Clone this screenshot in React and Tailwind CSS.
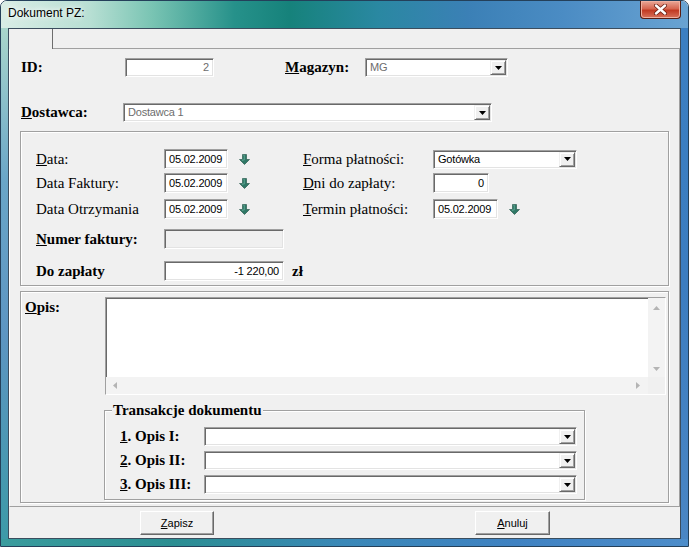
const serif = "font-['Liberation_Serif',serif]";
const sans = "font-['Liberation_Sans',Arial,sans-serif]";
const sunken =
  "border border-t-[#a0a0a0] border-l-[#a0a0a0] border-r-white border-b-white shadow-[inset_1px_1px_0_#696969,inset_-1px_-1px_0_#e3e3e3]";
const etched = "border border-[#a0a0a0] shadow-[inset_1px_1px_0_#fff,1px_1px_0_#fff]";

function Field({ className = "", value = "", right = false, muted = false, disabled = false }) {
  return (
    <div
      className={`${sunken} ${className} flex items-center px-[4px] ${disabled ? "bg-[#f0f0f0]" : "bg-white"} ${right ? "justify-end" : ""} ${sans} text-[11px] tracking-[-0.2px] ${muted ? "text-[#6d6d6d]" : "text-black"}`}
    >
      {value}
    </div>
  );
}

function DropBtn() {
  return (
    <div className="w-[16px] bg-[#f0f0f0] border border-t-[#f0f0f0] border-l-[#f0f0f0] border-r-[#696969] border-b-[#696969] shadow-[inset_1px_1px_0_#fff,inset_-1px_-1px_0_#a0a0a0] flex items-center justify-center">
      <svg width="7" height="4" viewBox="0 0 7 4">
        <path d="M0 0h7L3.5 4z" fill="#000" />
      </svg>
    </div>
  );
}

function Combo({ className = "", value = "", muted = false }) {
  return (
    <div className={`${sunken} ${className} h-[19px] bg-white flex items-stretch p-[1px]`}>
      <div
        className={`flex-1 flex items-center pl-[3px] ${sans} text-[11px] tracking-[-0.2px] ${muted ? "text-[#6d6d6d]" : "text-black"}`}
      >
        {value}
      </div>
      <DropBtn />
    </div>
  );
}

function GreenArrow({ className = "" }) {
  return (
    <svg className={className} width="11" height="11" viewBox="0 0 11 11">
      <path d="M3.5 0.5h4v5h3l-5 5-5-5h3z" fill="#2f7866" stroke="#1d4d42" strokeWidth="0.6" />
      <path d="M4.3 1.2h1v4.8h-2.3l0.6 0.6" fill="none" stroke="#6fb3a0" strokeWidth="0.7" />
    </svg>
  );
}

function Label({ className = "", bold = false, children }) {
  return (
    <div className={`${className} ${serif} text-[15px] leading-[17px] text-black ${bold ? "font-bold" : ""}`}>
      {children}
    </div>
  );
}

function Btn({ className = "", children }) {
  return (
    <div
      className={`${className} h-[24px] bg-[#f0f0f0] border border-t-white border-l-white border-r-[#696969] border-b-[#696969] shadow-[inset_-1px_-1px_0_#a0a0a0] flex items-center justify-center ${sans} text-[11px] text-black`}
    >
      {children}
    </div>
  );
}

function ScrollTri({ dir }) {
  const d = {
    up: "M0 4L3.5 0 7 4z",
    down: "M0 0h7L3.5 4z",
    left: "M4 0v7L0 3.5z",
    right: "M0 0v7L4 3.5z",
  }[dir];
  const vert = dir === "up" || dir === "down";
  return (
    <svg width={vert ? 7 : 4} height={vert ? 4 : 7} viewBox={vert ? "0 0 7 4" : "0 0 4 7"}>
      <path d={d} fill="#b4b4b4" />
    </svg>
  );
}

function DateRow({ label, value, right }) {
  return (
    <div className="flex items-center h-[20px]">
      <div className="w-[267px] flex items-center">
        <Label className="w-[128px]">{label}</Label>
        <Field className="w-[64px] h-[20px]" value={value} />
        <GreenArrow className="ml-[11px]" />
      </div>
      {right}
    </div>
  );
}

export default function App() {
  return (
    <div className="w-[689px] h-[547px] bg-white">
      <div className="w-[689px] h-[547px] flex flex-col border border-[#24405a] rounded-t-[7px] overflow-hidden">
        {/* title bar */}
        <div className="h-[27px] shrink-0 flex items-start justify-between bg-[linear-gradient(90deg,#d9ede6_0%,#b7dfd3_13%,#79c4b3_22%,#26918a_34%,#16827b_42%,#2a88a2_55%,#3b80b6_68%,#4b8cc4_82%,#69a3d2_100%)]">
          <div className={`pl-[7px] pt-[5px] text-[12px] leading-[14px] text-black ${sans} [text-shadow:0_0_5px_#fff,0_0_8px_#fff]`}>
            Dokument PZ:
          </div>
          <div className="mr-[7px] w-[41px] h-[18px] border border-t-0 border-[#5a1d12] rounded-b-[4px] bg-[linear-gradient(180deg,#e9a898_0%,#d66650_45%,#c23a22_55%,#d8735c_100%)] shadow-[inset_0_0_0_1px_#f0b0a0] flex items-center justify-center">
            <svg width="13" height="11" viewBox="0 0 13 11">
              <path d="M2 1.5l9 8M11 1.5l-9 8" stroke="#6b1e12" strokeWidth="4" strokeLinecap="round" />
              <path d="M2 1.5l9 8M11 1.5l-9 8" stroke="#fff" strokeWidth="2.4" strokeLinecap="round" />
            </svg>
          </div>
        </div>

        <div className="flex flex-1">
          <div className="w-[7px] bg-[linear-gradient(180deg,#a9d6cc_0%,#6aa6c8_30%,#5d95c2_60%,#3d9aa8_100%)]" />

          {/* client area */}
          <div className="w-[673px] border border-[#3b4d5e] bg-[#f0f0f0] flex flex-col">
            {/* tab header */}
            <div className="h-[20px] shrink-0 flex">
              <div className="w-[44px] border-r border-r-[#6d6d6d]" />
              <div className="flex-1 border-b border-b-[#a0a0a0]" />
            </div>

            {/* tab page */}
            <div className="h-[458px] shrink-0 flex flex-col border-l border-l-white border-r border-r-[#a0a0a0] border-b border-b-[#a0a0a0]">
              <div className="mt-[9px] pl-[11px] h-[19px] flex items-center">
                <Label bold className="w-[104px]">ID:</Label>
                <Field className="w-[89px] h-[19px]" value="2" right muted />
                <Label bold className="ml-[71px] w-[80px]">
                  <u>M</u>agazyn:
                </Label>
                <Combo className="w-[143px]" value="MG" muted />
              </div>

              <div className="mt-[26px] pl-[11px] h-[19px] flex items-center">
                <Label bold className="w-[102px]">
                  <u>D</u>ostawca:
                </Label>
                <Combo className="w-[369px]" value="Dostawca 1" muted />
              </div>

              {/* group 1 */}
              <div className={`mt-[9px] ml-[10px] w-[649px] h-[155px] shrink-0 ${etched} flex flex-col pl-[15px]`}>
                <div className="mt-[17px]">
                  <DateRow
                    label={<><u>D</u>ata:</>}
                    value="05.02.2009"
                    right={
                      <div className="flex items-center">
                        <Label className="w-[130px]">
                          <u>F</u>orma płatności:
                        </Label>
                        <Combo className="w-[144px]" value="Gotówka" />
                      </div>
                    }
                  />
                </div>
                <div className="mt-[4px]">
                  <DateRow
                    label="Data Faktury:"
                    value="05.02.2009"
                    right={
                      <div className="flex items-center">
                        <Label className="w-[130px]">
                          <u>D</u>ni do zapłaty:
                        </Label>
                        <Field className="w-[56px] h-[20px]" value="0" right />
                      </div>
                    }
                  />
                </div>
                <div className="mt-[6px]">
                  <DateRow
                    label="Data Otrzymania"
                    value="05.02.2009"
                    right={
                      <div className="flex items-center">
                        <Label className="w-[130px]">
                          <u>T</u>ermin płatności:
                        </Label>
                        <Field className="w-[65px] h-[20px]" value="05.02.2009" />
                        <GreenArrow className="ml-[11px]" />
                      </div>
                    }
                  />
                </div>
                <div className="mt-[10px] h-[20px] flex items-center">
                  <Label bold className="w-[128px]">
                    <u>N</u>umer faktury:
                  </Label>
                  <Field className="w-[120px] h-[20px]" disabled />
                </div>
                <div className="mt-[12px] h-[20px] flex items-center">
                  <Label bold className="w-[128px]">Do zapłaty</Label>
                  <Field className="w-[120px] h-[20px]" value="-1 220,00" right />
                  <Label bold className="ml-[8px]">zł</Label>
                </div>
              </div>

              {/* group 2 */}
              <div className={`mt-[5px] ml-[10px] w-[649px] h-[212px] shrink-0 ${etched} flex flex-col`}>
                <div className="mt-[5px] flex">
                  <Label bold className="w-[84px] pl-[4px] pt-[2px]">
                    <u>O</u>pis:
                  </Label>
                  <div className={`${sunken} w-[561px] h-[98px] bg-white flex flex-col`}>
                    <div className="flex-1 flex">
                      <div className="flex-1" />
                      <div className="w-[17px] bg-[#f3f3f3] flex flex-col justify-between items-center pt-[8px] pb-[6px]">
                        <ScrollTri dir="up" />
                        <ScrollTri dir="down" />
                      </div>
                    </div>
                    <div className="h-[17px] flex">
                      <div className="flex-1 bg-[#f3f3f3] flex items-center justify-between pl-[7px] pr-[8px]">
                        <ScrollTri dir="left" />
                        <ScrollTri dir="right" />
                      </div>
                      <div className="w-[17px] bg-[#f0f0f0]" />
                    </div>
                  </div>
                </div>

                {/* transakcje */}
                <div className={`mt-[15px] ml-[83px] w-[481px] h-[90px] ${etched} flex flex-col`}>
                  <Label bold className="-mt-[9px] ml-[7px] px-[1px] w-fit bg-[#f0f0f0]">
                    Transakcje dokumentu
                  </Label>
                  <div className="mt-[8px] pl-[15px] flex flex-col gap-[5px]">
                    <div className="h-[19px] flex items-center">
                      <Label bold className="w-[84px]">
                        <u>1</u>. Opis I:
                      </Label>
                      <Combo className="w-[373px]" />
                    </div>
                    <div className="h-[19px] flex items-center">
                      <Label bold className="w-[84px]">
                        <u>2</u>. Opis II:
                      </Label>
                      <Combo className="w-[373px]" />
                    </div>
                    <div className="h-[19px] flex items-center">
                      <Label bold className="w-[84px]">
                        <u>3</u>. Opis III:
                      </Label>
                      <Combo className="w-[373px]" />
                    </div>
                  </div>
                </div>
              </div>
            </div>

            {/* buttons */}
            <div className="flex-1 flex items-start pt-[4px]">
              <Btn className="ml-[131px] w-[74px]">
                <u>Z</u>apisz
              </Btn>
              <Btn className="ml-[261px] w-[75px]">
                <u>A</u>nuluj
              </Btn>
            </div>
          </div>

          <div className="w-[7px] bg-[linear-gradient(180deg,#3b7fc2_0%,#3c7dc0_50%,#4a86c4_100%)]" />
        </div>

        <div className="h-[7px] shrink-0 bg-[linear-gradient(90deg,#3a9c9e_0%,#2b8e92_25%,#3a88b8_50%,#3f82c2_75%,#4d8dca_100%)]" />
      </div>
    </div>
  );
}
